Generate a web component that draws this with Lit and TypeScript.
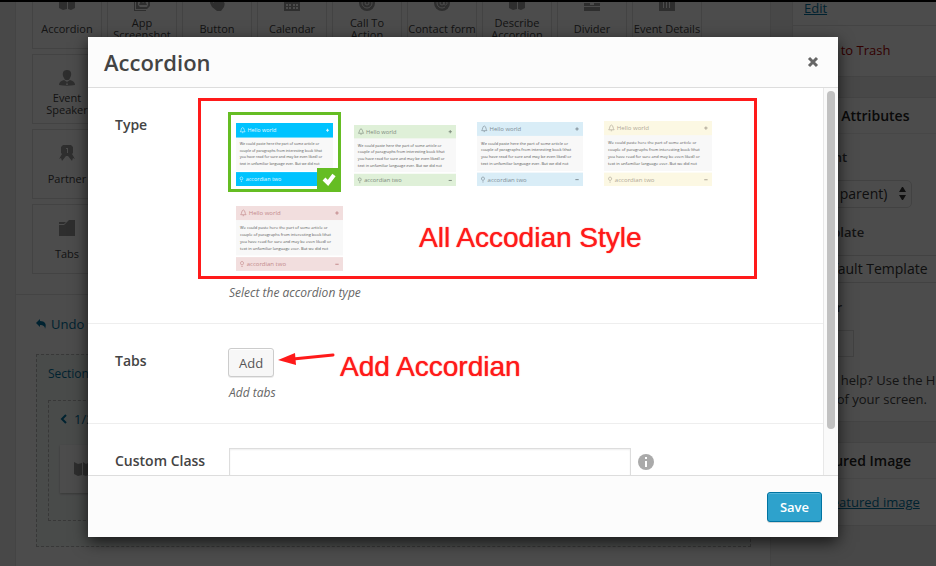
import { LitElement, html, css, svg } from "lit";
import { customElement, property, state } from "lit/decorators.js";

const ICONS: Record<string, unknown> = {
  accordion: svg`<path d="M0 1l4 2v12l-4-2zM4 3l4-1v12l-4 1zM9 1l3 2v12l-3-1zM12 3l4-2v12l-4 2z"/>`,
  screenshot: svg`<path d="M0 5h1v10h11v1H0zM2 0h14v11l-3 3H2zm2 2v8l2 2h7l1-2V2zM5 10l2-5 2 3 2-2 2 4z" fill-rule="evenodd"/>`,
  button: svg`<path d="M5 1c0-2 3-2 3 0v4l5 1c3 1 3 3 2 6l-3 4H8L3 12 1 8c0-2 2-2 3-1l1 1z"/>`,
  calendar: svg`<path d="M0 1h16v15H0zm2 4v2h2V5zm3 0v2h2V5zm4 0v2h2V5zm3 0v2h2V5zM2 9v2h2V9zm3 0v2h2V9zm4 0v2h2V9zm3 0v2h2V9zM2 12v2h2v-2zm3 0v2h2v-2zm4 0v2h2v-2zm3 0v2h2v-2z" fill-rule="evenodd"/>`,
  target: svg`<circle cx="8" cy="8" r="8"/><g fill="none" stroke="#fff"><circle cx="8" cy="8" r="5"/><circle cx="8" cy="8" r="2"/></g>`,
  contact: svg`<circle cx="8" cy="8" r="8"/><g fill="none" stroke="#fff"><circle cx="8" cy="8" r="2"/><path d="M10 6v3c1 2 3 1 3-1a5 5 0 1 0-2 4"/></g>`,
  divider: svg`<path d="M3 2h10v5H3zM0 8h6v2h4V8h6v3H0zM0 12h16v4H0z"/>`,
  details: svg`<path d="M0 1h16v15H0zm4 5v7h1V6zm3 0v7h1V6zm3 0v7h1V6z" fill-rule="evenodd"/>`,
  speaker: svg`<path d="M8 0c5 0 5 5 3 8-1 2-1 2-3 2s-2 0-3-2C3 5 3 0 8 0zM0 15c0-3 2-4 5-5l3 2 3-2c3 1 5 2 5 5-5 1-11 1-16 0z"/><path d="M8 12l1 3H7z" fill="#fff"/>`,
  partner: svg`<path d="M4 0h8l2 2v6l-1 1 3 5-2-1-1 3-4-5H7l-4 5-1-3-2 1 3-5-1-1V2z"/><path d="M7 3h2v5H8V4H7z" fill="#fff"/>`,
  tabs: svg`<path d="M0 2h7L5 4H0zM0 5h5l5-5h6v16H0z"/>`,
};

const icon = (name: string) =>
  html`<svg class="icon" viewBox="0 0 16 16" aria-hidden="true">${ICONS[name]}</svg>`;

const TILES: [string, string][] = [
  ["accordion", "Accordion"],
  ["screenshot", "App Screenshot"],
  ["button", "Button"],
  ["calendar", "Calendar"],
  ["target", "Call To Action"],
  ["contact", "Contact form"],
  ["accordion", "Describe Accordion"],
  ["divider", "Divider"],
  ["details", "Event Details"],
];
const MORE: [string, string][] = [
  ["speaker", "Event Speaker"],
  ["partner", "Partner"],
  ["tabs", "Tabs"],
];

const SAMPLE = [
  "We could paste here the part of some article or",
  "couple of paragraphs from interesting book (that",
  "you have read for sure and may be even liked) or",
  "text in unfamiliar language ever. But we did not",
];

interface Variant {
  id: string;
  bar: string;
  ink: string;
  head: number;
  foot: number;
}

const VARIANTS: Variant[] = [
  { id: "primary", bar: "#00c3ff", ink: "#e6f9ff", head: 48, foot: 162 },
  { id: "success", bar: "#dff0d8", ink: "#7e8a7e", head: 42, foot: 153 },
  { id: "info", bar: "#d9edf7", ink: "#7f8d96", head: 42, foot: 153 },
  { id: "warning", bar: "#fcf8e3", ink: "#b0a898", head: 42, foot: 153 },
  { id: "danger", bar: "#f2dede", ink: "#c38a8c", head: 42, foot: 153 },
];

@customElement("accordion-preview")
export class AccordionPreview extends LitElement {
  @property({ attribute: false }) variant!: Variant;

  static styles = css`
    :host { display: block; }
    svg { display: block; width: 100%; height: auto; font-family: "Open Sans", sans-serif; }
    .copy { font-size: 12px; fill: #555; }
    .title { font-size: 18px; }
  `;

  render() {
    const { bar, ink, head, foot } = this.variant;
    const bottom = foot + head - 1;
    return html`<svg viewBox="0 0 320 ${bottom}" aria-hidden="true">
      <rect width="320" height=${bottom} fill="#f8f8f8" />
      <rect y=${foot - 5} width="320" height="5" fill="#fff" />
      <rect width="320" height=${head} fill=${bar} />
      <rect y=${foot} width="320" height=${head - 1} fill=${bar} />
      <g fill="none" stroke=${ink} stroke-width="2">
        <path d="M14 ${head / 2 + 5}h16c-4-4-2-13-8-14-6 1-4 10-8 14zM20 ${head / 2 + 8}h4" />
        <path d="M16 ${foot + head / 2 + 2}c-5-5-2-10 2-10s7 5 2 10zM16 ${foot + head / 2 + 7}h4" />
        <path stroke-width="3" d="M297 ${head / 2}h10M302 ${head / 2 - 5}v10M297 ${foot + head / 2}h10" />
      </g>
      <g class="title" fill=${ink}>
        <text x="38" y=${head / 2 + 6}>Hello world</text>
        <text x="32" y=${foot + head / 2 + 6}>accordian two</text>
      </g>
      <g class="copy">
        ${SAMPLE.map((line, i) => svg`<text x="12" y=${head + 26 + i * 21}>${line}</text>`)}
      </g>
    </svg>`;
  }
}

@customElement("builder-page")
export class BuilderPage extends LitElement {
  static styles = css`
    :host { display: block; background: #f1f1f1; color: #444; font: 13px/20px "Open Sans", sans-serif; }
    * { box-sizing: border-box; }
    a { color: #0074a2; }
    .columns { display: grid; grid-template-columns: minmax(0, 1fr) 280px; column-gap: 21px; margin: 0 -136px 0 15px; }
    .builder { min-height: 100vh; background: #fff; border: solid #e5e5e5; border-width: 0 1px; }
    .tiles { display: flex; flex-wrap: wrap; gap: 5px; padding: 0 16px; }
    .library { margin-top: -21px; padding-bottom: 20px; border-bottom: 1px solid #e5e5e5; }
    .stack { flex-direction: column; margin-top: 5px; }
    .tile { display: flex; flex-direction: column; align-items: center; width: 70px; height: 70px; padding: 15px 0 0;
      border: 1px solid #e1e1e1; background: #fff; color: #444; font: 11px/12px "Open Sans", sans-serif; }
    .icon { display: block; width: 16px; height: 16px; flex: none; fill: #999; }
    .caption { display: flex; align-items: center; height: 24px; margin-top: 6px; }
    .undo { display: flex; align-items: center; gap: 4px; margin: 19px 0 20px 20px; color: #0074a2; text-decoration: none; font-size: 13px; }
    .undo svg { width: 11px; height: 10px; fill: #0074a2; }
    .section { margin: 0 19px 0 20px; padding: 9px 11px 25px; border: 1px dashed #bbb; background: #f5faf8; }
    .name { color: #0074a2; font-size: 12px; }
    .row { margin-top: 16px; padding: 8px 11px 27px; border: 1px dashed #bbb; }
    .pager { display: flex; align-items: center; gap: 6px; color: #0074a2; }
    .pager svg { width: 8px; height: 10px; fill: none; stroke: #0074a2; stroke-width: 2; }
    .card { height: 48px; margin-top: 16px; padding: 16px 14px; background: #fff; box-shadow: 0 1px 2px #bbb; }
    .box { margin-bottom: 20px; border: 1px solid #e5e5e5; background: #fff; }
    .box h3 { margin: 0; padding: 8px 12px; border-bottom: 1px solid #eee; color: #222; font-size: 14px; font-weight: 600; line-height: 19px; }
    .publish { padding-top: 0; border-top: 0; }
    .status { height: 26px; padding: 0 11px; line-height: 16px; border-bottom: 1px solid #e5e5e5; }
    .trash { height: 50px; padding: 14px 11px; }
    .trash a { color: #a00; text-decoration: none; }
    .fields { display: flex; flex-direction: column; align-items: flex-start; padding: 13px 12px 12px; }
    .fields label { margin-bottom: 13px; font-weight: 600; }
    .fields select, .fields input { margin-bottom: 14px; border: 1px solid #ddd; background: #fff; color: #333; font: 14px "Open Sans", sans-serif; }
    .pick { position: relative; display: flex; }
    .pick select { appearance: none; width: 107px; height: 28px; padding: 0 10px 2px 9px; border-radius: 5px; }
    .pick svg { position: absolute; right: 6px; top: 7px; width: 7px; height: 13px; fill: #333; }
    .fields .wide { appearance: none; width: 100%; height: 28px; padding: 0 0 2px 9px; }
    .fields .order { width: 49px; height: 27px; margin-bottom: 14px; }
    .fields p { margin: 0; line-height: 19px; }
    .feature { padding: 13px 12px; }
  `;

  private tile = ([name, label]: [string, string]) => html`<button class="tile" type="button">
    ${icon(name)}<span class="caption">${label}</span>
  </button>`;

  render() {
    return html`<div class="columns">
      <main class="builder">
        <div class="library">
          <div class="tiles">${TILES.map(this.tile)}</div>
          <div class="tiles stack">${MORE.map(this.tile)}</div>
        </div>
        <a class="undo" href="#undo"><svg viewBox="0 0 11 10"><path d="M0 4l4-4v2c5 0 7 3 5 8 0-3-2-4-5-4v2z" /></svg>Undo</a>
        <section class="section">
          <div class="name">Section</div>
          <div class="row">
            <div class="pager"><svg viewBox="0 0 8 10"><path d="M6 1L2 5l4 4" /></svg>1/2</div>
            <div class="card">${icon("accordion")}</div>
          </div>
        </section>
      </main>
      <aside>
        <section class="box publish">
          <div class="status"><a href="#edit">Edit</a></div>
          <div class="trash"><a href="#trash">Move to Trash</a></div>
        </section>
        <section class="box">
          <h3>Page Attributes</h3>
          <div class="fields">
            <label for="parent">Parent</label>
            <div class="pick">
              <select id="parent"><option>(no parent)</option></select>
              <svg viewBox="0 0 7 13"><path d="M0 5l3-5h1l3 5zM0 8h7l-3 5H3z" /></svg>
            </div>
            <label for="template">Template</label>
            <select id="template" class="wide"><option>Default Template</option></select>
            <label for="order">Order</label>
            <input id="order" class="order" type="text" />
            <p>Need help? Use the Help tab in the upper right of your screen.</p>
          </div>
        </section>
        <section class="box">
          <h3>Featured Image</h3>
          <div class="feature"><a href="#featured">Set featured image</a></div>
        </section>
      </aside>
    </div>`;
  }
}

@customElement("app-root")
export class AppRoot extends LitElement {
  @state() private selected = "primary";

  static styles = css`
    :host { display: block; position: relative; height: 100vh; overflow: hidden; font: 13px/20px "Open Sans", sans-serif; color: #444; }
    * { box-sizing: border-box; }
    .shade { position: absolute; inset: 0; border-top: 2px solid #000; background: rgba(0, 0, 0, 0.7); }
    .modal { position: absolute; inset: 37px 98px 29px 88px; display: flex; flex-direction: column; background: #fcfcfc; box-shadow: 0 5px 15px rgba(0, 0, 0, 0.7); }
    .head { display: flex; align-items: center; justify-content: space-between; height: 51px; flex: none; padding: 0 15px 0 16px; border-bottom: 1px solid #ddd; }
    h1 { margin: 0; font-size: 22px; font-weight: 600; line-height: 30px; }
    .close { padding: 4px; border: 0; background: none; }
    .close svg { display: block; width: 12px; height: 12px; stroke: #666; stroke-width: 3; }
    .body { position: relative; display: flex; flex: 1; min-height: 0; overflow: hidden; background: #fff; }
    .form { flex: 1; min-width: 0; }
    .track { width: 15px; padding: 3px; border-left: 1px solid #e8e8e8; background: #fafafa; }
    .thumb { width: 8px; height: 338px; border-radius: 4px; background: #c1c1c1; }
    .field { display: grid; grid-template-columns: 114px minmax(0, 1fr); padding: 24px 0 22px 26px; border-bottom: 1px solid #eee; }
    .label { padding-left: 1px; font-size: 14px; font-weight: 600; line-height: 26px; }
    .hint { margin: 0; padding: 7px 0 0 1px; color: #666; font-size: 12px; font-style: italic; line-height: 17px; }
    .options { display: flex; flex-wrap: wrap; align-items: flex-end; gap: 5px; }
    .option { position: relative; padding: 6px 5px 3px; border: 3px solid transparent; }
    .option.on { border-color: #65bd23; }
    .option input { position: absolute; opacity: 0; margin: 0; }
    .option.primary { width: 113px; padding-top: 8px; }
    .success { width: 118px; }
    .info { width: 122px; }
    .warning { width: 124px; }
    .danger { width: 123px; }
    .check { position: absolute; right: -3px; bottom: -3px; width: 24px; height: 24px; background: #65bd23; }
    .add { display: block; padding: 0 10px; height: 29px; border: 1px solid #ccc; border-radius: 3px; background: #f7f7f7; color: #555; box-shadow: inset 0 1px 0 #fff, 0 1px 0 rgba(0, 0, 0, 0.08); font: 13px "Open Sans", sans-serif; }
    .entry { display: flex; align-items: center; gap: 7px; }
    .entry input { width: 402px; height: 28px; margin-left: 1px; border: 1px solid #ddd; background: #fff; box-shadow: inset 0 1px 2px rgba(0, 0, 0, 0.07); font: 14px "Open Sans", sans-serif; }
    .info-icon { width: 16px; height: 16px; fill: #aaa; }
    .foot { display: flex; align-items: center; justify-content: flex-end; height: 62px; flex: none; padding: 0 16px; border-top: 1px solid #ddd; }
    .save { height: 30px; padding: 0 12px; border: 1px solid #0074a2; border-radius: 3px; background: #2ea2cc; color: #fff; box-shadow: inset 0 1px 0 rgba(120, 200, 230, 0.5), 0 1px 0 rgba(0, 0, 0, 0.15); font: 600 13px "Open Sans", sans-serif; }
    .frame { position: absolute; left: 110px; top: 10px; width: 559px; height: 181px; border: 3px solid #ff1a1a; pointer-events: none; }
    .note { position: absolute; color: #ff1a1a; font: 28px/32px "Liberation Sans", sans-serif; text-shadow: 0 0 1px #ff1a1a; white-space: nowrap; }
    .note-types { left: 331px; top: 134px; }
    .note-add { left: 252px; top: 263px; }
    .arrow { position: absolute; left: 190px; top: 264px; width: 58px; height: 14px; }
  `;

  render() {
    return html`<builder-page></builder-page>
      <div class="shade"></div>
      <div class="modal" role="dialog" aria-labelledby="title">
        <header class="head">
          <h1 id="title">Accordion</h1>
          <button class="close" type="button" aria-label="Close"><svg viewBox="0 0 12 12"><path d="M2 2l8 8M10 2l-8 8" /></svg></button>
        </header>
        <div class="body">
          <form class="form">
            <div class="field">
              <div class="label" id="type">Type</div>
              <div>
                <div class="options" role="radiogroup" aria-labelledby="type">
                  ${VARIANTS.map((v) => {
                    const on = v.id === this.selected;
                    return html`<label class="option ${v.id} ${on ? "on" : ""}">
                      <input type="radio" name="type" aria-label=${v.id} .checked=${on} @change=${() => (this.selected = v.id)} />
                      <accordion-preview .variant=${v}></accordion-preview>
                      ${on ? html`<svg class="check" viewBox="0 0 24 24"><path d="M7 11l4 4 6-8" fill="none" stroke="#fff" stroke-width="4" /></svg>` : ""}
                    </label>`;
                  })}
                </div>
                <p class="hint">Select the accordion type</p>
              </div>
            </div>
            <div class="field">
              <div class="label">Tabs</div>
              <div>
                <button class="add" type="button">Add</button>
                <p class="hint">Add tabs</p>
              </div>
            </div>
            <div class="field">
              <label class="label" for="custom">Custom Class</label>
              <div class="entry">
                <input id="custom" type="text" />
                <svg class="info-icon" viewBox="0 0 16 16"><circle cx="8" cy="8" r="8" /><path d="M7 3h2v2H7zM7 7h2v6H7z" fill="#fff" /></svg>
              </div>
            </div>
          </form>
          <div class="track"><div class="thumb"></div></div>
          <div class="frame"></div>
          <div class="note note-types">All Accodian Style</div>
          <div class="note note-add">Add Accordian</div>
          <svg class="arrow" viewBox="0 0 58 14"><path d="M55 3L15 7" stroke="#ff1a1a" stroke-width="3" stroke-linecap="round" /><path d="M0 8l17-7 1 12z" fill="#ff1a1a" /></svg>
        </div>
        <footer class="foot"><button class="save" type="button">Save</button></footer>
      </div>`;
  }
}
